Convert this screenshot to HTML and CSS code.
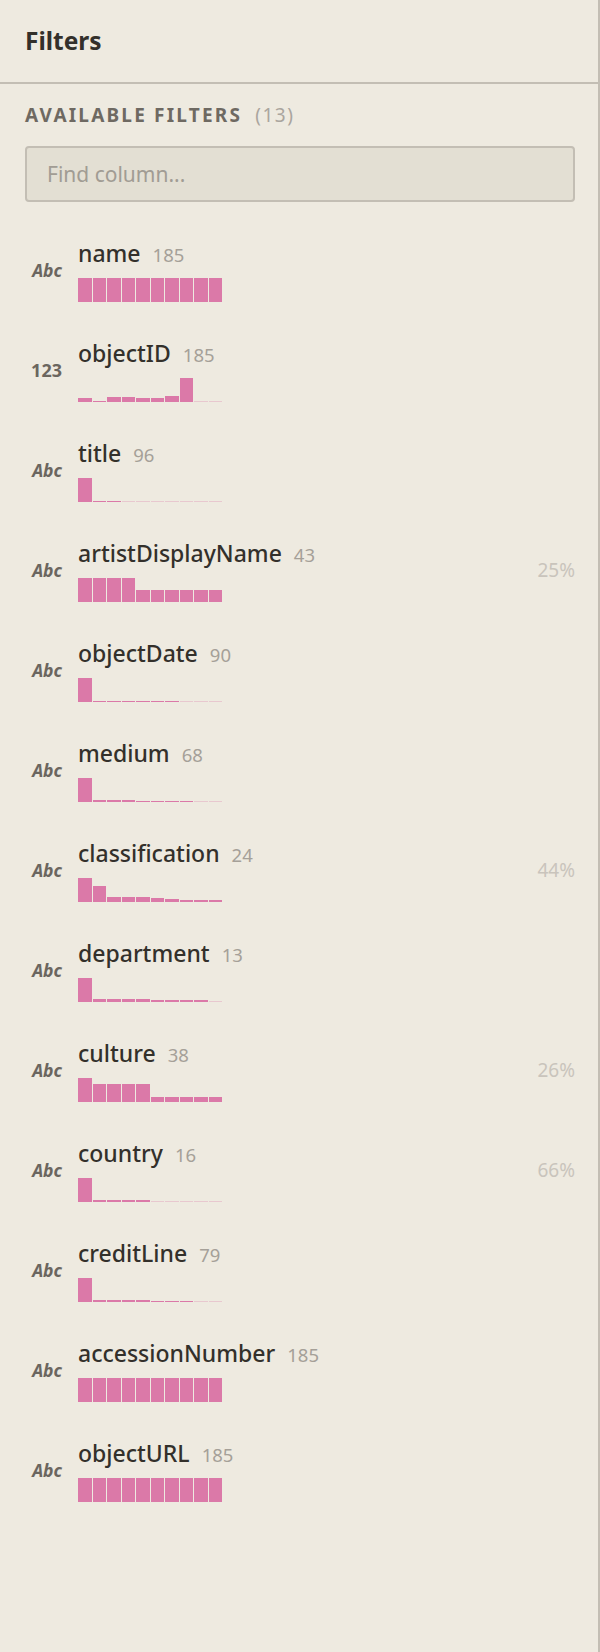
FILE: index.html
```html
<!DOCTYPE html>
<html lang="en">
<head>
<meta charset="utf-8">
<title>Filters</title>
<link rel="stylesheet" href="styles.css">
</head>
<body>
<div class="panel">
  <header class="panel-header">
    <h1 class="panel-title">Filters</h1>
  </header>
  <div class="panel-body">
    <div class="section-title">AVAILABLE FILTERS <span class="section-count">(13)</span></div>
    <input class="search" type="text" placeholder="Find column...">
    <div class="list">
      <div class="row">
        <div class="type type-text">Abc</div>
        <div class="main">
          <div class="head"><span class="name">name</span><span class="count">185</span></div>
          <div class="hist"><i style="height:24px"></i><i style="height:24px"></i><i style="height:24px"></i><i style="height:24px"></i><i style="height:24px"></i><i style="height:24px"></i><i style="height:24px"></i><i style="height:24px"></i><i style="height:24px"></i><i style="height:24px"></i></div>
        </div>
      </div>
      <div class="row">
        <div class="type type-num">123</div>
        <div class="main">
          <div class="head"><span class="name">objectID</span><span class="count">185</span></div>
          <div class="hist"><i style="height:4px"></i><i style="height:1px"></i><i style="height:5px"></i><i style="height:5px"></i><i style="height:4px"></i><i style="height:4px"></i><i style="height:6px"></i><i style="height:24px"></i><i class="faint" style="height:1px"></i><i class="faint" style="height:1px"></i></div>
        </div>
      </div>
      <div class="row">
        <div class="type type-text">Abc</div>
        <div class="main">
          <div class="head"><span class="name">title</span><span class="count">96</span></div>
          <div class="hist"><i style="height:24px"></i><i style="height:1px"></i><i style="height:1px"></i><i class="faint" style="height:1px"></i><i class="faint" style="height:1px"></i><i class="faint" style="height:1px"></i><i class="faint" style="height:1px"></i><i class="faint" style="height:1px"></i><i class="faint" style="height:1px"></i><i class="faint" style="height:1px"></i></div>
        </div>
      </div>
      <div class="row">
        <div class="type type-text">Abc</div>
        <div class="main">
          <div class="head"><span class="name">artistDisplayName</span><span class="count">43</span></div>
          <div class="hist"><i style="height:24px"></i><i style="height:24px"></i><i style="height:24px"></i><i style="height:24px"></i><i style="height:12px"></i><i style="height:12px"></i><i style="height:12px"></i><i style="height:12px"></i><i style="height:12px"></i><i style="height:12px"></i></div>
        </div>
        <div class="pct">25%</div>
      </div>
      <div class="row">
        <div class="type type-text">Abc</div>
        <div class="main">
          <div class="head"><span class="name">objectDate</span><span class="count">90</span></div>
          <div class="hist"><i style="height:24px"></i><i style="height:1px"></i><i style="height:1px"></i><i style="height:1px"></i><i style="height:1px"></i><i style="height:1px"></i><i style="height:1px"></i><i class="faint" style="height:1px"></i><i class="faint" style="height:1px"></i><i class="faint" style="height:1px"></i></div>
        </div>
      </div>
      <div class="row">
        <div class="type type-text">Abc</div>
        <div class="main">
          <div class="head"><span class="name">medium</span><span class="count">68</span></div>
          <div class="hist"><i style="height:24px"></i><i style="height:2px"></i><i style="height:2px"></i><i style="height:2px"></i><i style="height:1px"></i><i style="height:1px"></i><i style="height:1px"></i><i style="height:1px"></i><i class="faint" style="height:1px"></i><i class="faint" style="height:1px"></i></div>
        </div>
      </div>
      <div class="row">
        <div class="type type-text">Abc</div>
        <div class="main">
          <div class="head"><span class="name">classification</span><span class="count">24</span></div>
          <div class="hist"><i style="height:24px"></i><i style="height:16px"></i><i style="height:5px"></i><i style="height:5px"></i><i style="height:5px"></i><i style="height:4px"></i><i style="height:3px"></i><i style="height:2px"></i><i style="height:2px"></i><i style="height:2px"></i></div>
        </div>
        <div class="pct">44%</div>
      </div>
      <div class="row">
        <div class="type type-text">Abc</div>
        <div class="main">
          <div class="head"><span class="name">department</span><span class="count">13</span></div>
          <div class="hist"><i style="height:24px"></i><i style="height:3px"></i><i style="height:3px"></i><i style="height:3px"></i><i style="height:3px"></i><i style="height:2px"></i><i style="height:2px"></i><i style="height:2px"></i><i style="height:2px"></i><i class="faint" style="height:1px"></i></div>
        </div>
      </div>
      <div class="row">
        <div class="type type-text">Abc</div>
        <div class="main">
          <div class="head"><span class="name">culture</span><span class="count">38</span></div>
          <div class="hist"><i style="height:24px"></i><i style="height:18px"></i><i style="height:18px"></i><i style="height:18px"></i><i style="height:18px"></i><i style="height:5px"></i><i style="height:5px"></i><i style="height:5px"></i><i style="height:5px"></i><i style="height:5px"></i></div>
        </div>
        <div class="pct">26%</div>
      </div>
      <div class="row">
        <div class="type type-text">Abc</div>
        <div class="main">
          <div class="head"><span class="name">country</span><span class="count">16</span></div>
          <div class="hist"><i style="height:24px"></i><i style="height:2px"></i><i style="height:2px"></i><i style="height:2px"></i><i style="height:2px"></i><i class="faint" style="height:1px"></i><i class="faint" style="height:1px"></i><i class="faint" style="height:1px"></i><i class="faint" style="height:1px"></i><i class="faint" style="height:1px"></i></div>
        </div>
        <div class="pct">66%</div>
      </div>
      <div class="row">
        <div class="type type-text">Abc</div>
        <div class="main">
          <div class="head"><span class="name">creditLine</span><span class="count">79</span></div>
          <div class="hist"><i style="height:24px"></i><i style="height:2px"></i><i style="height:2px"></i><i style="height:2px"></i><i style="height:2px"></i><i style="height:1px"></i><i style="height:1px"></i><i style="height:1px"></i><i class="faint" style="height:1px"></i><i class="faint" style="height:1px"></i></div>
        </div>
      </div>
      <div class="row">
        <div class="type type-text">Abc</div>
        <div class="main">
          <div class="head"><span class="name">accessionNumber</span><span class="count">185</span></div>
          <div class="hist"><i style="height:24px"></i><i style="height:24px"></i><i style="height:24px"></i><i style="height:24px"></i><i style="height:24px"></i><i style="height:24px"></i><i style="height:24px"></i><i style="height:24px"></i><i style="height:24px"></i><i style="height:24px"></i></div>
        </div>
      </div>
      <div class="row">
        <div class="type type-text">Abc</div>
        <div class="main">
          <div class="head"><span class="name">objectURL</span><span class="count">185</span></div>
          <div class="hist"><i style="height:24px"></i><i style="height:24px"></i><i style="height:24px"></i><i style="height:24px"></i><i style="height:24px"></i><i style="height:24px"></i><i style="height:24px"></i><i style="height:24px"></i><i style="height:24px"></i><i style="height:24px"></i></div>
        </div>
      </div>
    </div>
  </div>
</div>
</body>
</html>
```
FILE: styles.css
```css
html, body {
  margin: 0;
  padding: 0;
  background: #eeeae0;
}

.panel {
  box-sizing: border-box;
  width: 600px;
  height: 1652px;
  background: #eeeae0;
  border-right: 2px solid #c3beb4;
  font-family: "Noto Sans", "Open Sans", sans-serif;
  color: #33302b;
}

.panel-header {
  box-sizing: border-box;
  height: 84px;
  border-bottom: 2px solid #c3beb4;
  display: flex;
  align-items: center;
  padding-left: 25px;
}

.panel-title {
  margin: 0;
  font-size: 24.5px;
  font-weight: 700;
  line-height: 32px;
  color: #33302b;
}

.panel-body {
  padding: 19px 23px 0 25px;
}

.section-title {
  font-size: 19px;
  line-height: 24px;
  font-weight: 700;
  letter-spacing: 2.2px;
  color: #6e6962;
}

.section-count {
  font-weight: 400;
  color: #aaa59e;
  letter-spacing: 1.5px;
  margin-left: 6px;
}

.search {
  display: block;
  box-sizing: border-box;
  width: 100%;
  height: 56px;
  margin-top: 19px;
  padding: 0 20px;
  background: #e3dfd3;
  border: 2px solid #c3beb4;
  border-radius: 4px;
  font-family: inherit;
  font-size: 21px;
  color: #33302b;
  outline: none;
}

.search::placeholder {
  color: #a19c94;
}

.list {
  margin-top: 18px;
}

.row {
  height: 100px;
  display: flex;
  align-items: center;
}

.type {
  width: 37px;
  text-align: right;
  flex: none;
  color: #6b665f;
  font-weight: 700;
}

.type-text {
  font-size: 17.5px;
  font-style: italic;
}

.type-num {
  font-size: 18px;
}

.main {
  margin-left: 16px;
  display: flex;
  flex-direction: column;
}

.head {
  display: flex;
  align-items: baseline;
  line-height: 30px;
  white-space: nowrap;
}

.name {
  font-size: 23px;
  font-weight: 500;
  color: #33302b;
}

.count {
  margin-left: 12px;
  font-size: 18.5px;
  color: #a5a098;
}

.hist {
  margin-top: 8px;
  width: 144px;
  height: 24px;
  display: flex;
  align-items: flex-end;
  gap: 1px;
}

.hist i {
  flex: 1;
  background: #db79a8;
}

.hist i.faint {
  opacity: 0.3;
}

.pct {
  margin-left: auto;
  font-size: 19px;
  color: #c9c4bc;
}
```
